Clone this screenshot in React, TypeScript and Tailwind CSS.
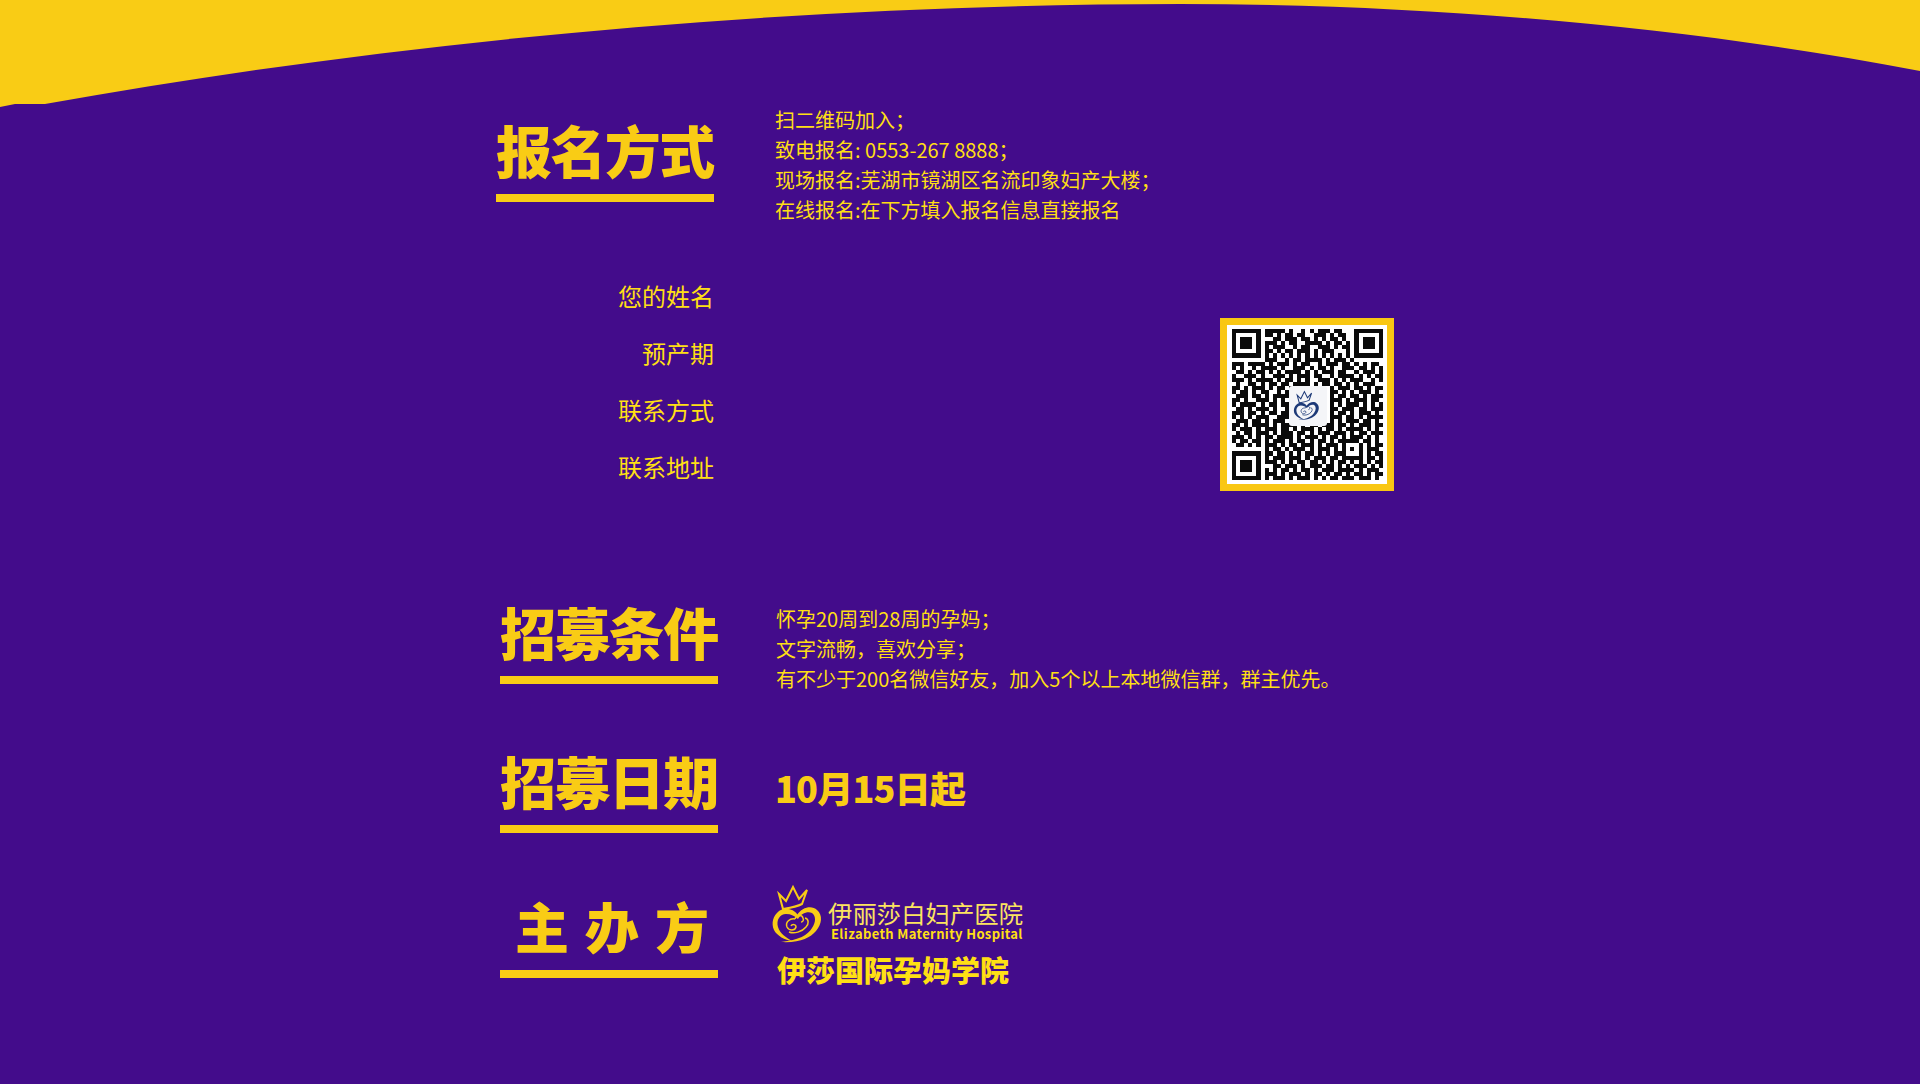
import React from 'react';

const YELLOW = '#f9cc15';

// hand-read from the picture, 37 x 37 modules
const qrRows = [
  '#######.#####.#..#.#.###.##...#######',
  '#.....#.##.#.##.##..###.#.##..#.....#',
  '#.###.#...##.###.##.#.#.##.#..#.###.#',
  '#.###.#.###.#.##..####.#.##.#.#.###.#',
  '#.###.#.#.###..#.##..###.#.##.#.###.#',
  '#.....#.##.#.##.###.#.###...#.#.....#',
  '#######.#.#.#.#.#.#.#.#.#.#.#.#######',
  '........###..#.##.####.#.###.#.......',
  '###.####.#.###.#.##..#.###.##.#.#.##.',
  '#.#..#.####.#..###.#.##.#..###.##.#.#',
  '.##.#.##.#.#.####.#.#.###.##..#.###.#',
  '#..###.#..###.#.###.##..#.####.#.#.##',
  '###.#.####.#.##.#.#..###.#.#.###..#.#',
  '.#..##.#.##.##.####.#.##.##.#.#.###..',
  '##.#.###.#.##.###.#.##..#.###.##.#.##',
  '#.##.#.##..#.##.#.###.#.##.#.#.###.#.',
  '.###.##.#.####.#.##.#...#.##.##.#.###',
  '##.#..###.#.#.###.#.###.###.#.###.##.',
  '#.####.#.##.##.#.#.##.#.#.#.###.#.#.#',
  '.##.#.###.#..##.###.#.#.##.###.##.###',
  '###.##.#.##.##.#.#.##.#.#.##.#.###.#.',
  '#.#.#.###..###.#.##.#.#.###.##.#.####',
  '.###.##.#.###.#.#.###.#.#.#.###.##.#.',
  '##.#.####.#.####.#.##.###.##.#.###.##',
  '#.###.#.###.##.#.###.#.##.#.####.#.#.',
  '.#.##.###.#.###.##.#.###.###.#.##.###',
  '###.#.#.##.####.#.###.#.##.#.###.#.#.',
  '#.##.##.#.###.#.##.#.##.#.#####.##.#.',
  '.##.#.#.###.#.##.###.#.###.#...#.#.##',
  '........#.##.#.###.#.###.#.#.#.#.###.',
  '#######.##.##.#.#.##.#.#.###...#.#.##',
  '#.....#.#.###.###.#.###.##.#####.##.#',
  '#.###.#.###.#.#.##.##.#.#.##.#.#.#.##',
  '#.###.#...##.###.#.###.##.#.#.###.#.#',
  '#.###.#.#.#.##.#.##.#.###.####.#.###.',
  '#.....#.###.#.###.#.##.#.##.#.##.#.##',
  '#######.#.###.#.###.#.#.##.###.###.#.',
];

const Logo = ({ color, className }: { color: string; className: string }) => (
  <svg viewBox="0 0 70 70" className={className} fill="none">
    <path
      d="M14 14 L21 21 L28 7 L34 19 L42 10 L37 24 C31 27 24 28 18 29 Z"
      stroke={color}
      strokeWidth="2"
      strokeLinejoin="miter"
    />
    <path
      d="M33 35 C28 28 20 27 14 31 C8 36 6 43 9 50 C12 56 20 60 27 61 C22 58 15 54 13 47 C11 40 15 34 21 34 C26 34 30 36 33 39 Z"
      fill={color}
    />
    <path
      d="M32 35 C37 27 47 25 52 30 C58 35 57 44 51 51 C45 58 35 63 16 62 C34 60 43 55 47 48 C51 42 51 36 47 33 C42 31 36 34 33 39 Z"
      fill={color}
    />
    <path
      d="M30 39 C25 38 20 42 22 47 C24 51 30 51 31 47 C31 44 27 44 26 46 M30 39 C31 35 37 34 38 38 C39 40 38 42 36 42 M40 38 C44 39 44 44 41 47 C37 52 29 54 24 52"
      stroke={color}
      strokeWidth="1.5"
    />
  </svg>
);

const QrCode = () => (
  <div className="relative w-[174px] h-[173px] bg-white border-[7px] border-[#f9c712] flex items-center justify-center">
    <svg viewBox="0 0 37 37" className="w-[151px] h-[151px]" shapeRendering="crispEdges">
      {qrRows.map((row, y) =>
        row.split('').map((c, x) => (c === '#' ? <rect key={`${x}-${y}`} x={x} y={y} width="1" height="1" fill="#0a0a0a" /> : null)),
      )}
    </svg>
    <div className="absolute left-[62px] top-[61px] w-[38px] h-[40px] bg-[#f4f5f8] rounded-[3px] flex items-center justify-center">
      <Logo color="#1d3a78" className="w-[36px] h-[36px]" />
    </div>
  </div>
);

const SectionTitle = ({ title, spaced }: { title: string; spaced?: boolean }) => (
  <div className="w-[218px] shrink-0">
    <h2
      className={
        spaced
          ? 'h-16 pl-[15px] text-[54px] leading-[60px] font-black tracking-[16px] whitespace-nowrap'
          : 'h-16 text-[56px] leading-[58px] font-black tracking-[-1.6px] whitespace-nowrap'
      }
    >
      {title}
    </h2>
    <div className="mt-[10px] h-2 bg-[#f9cc15]" />
  </div>
);

const TextLines = ({ lines }: { lines: string[] }) => (
  <div className="text-[20px] leading-[30px] text-[#ffdf14]">
    {lines.map((line) => (
      <p key={line} className="whitespace-nowrap">{line}</p>
    ))}
  </div>
);

export default function App() {
  return (
    <div
      className="relative h-[1084px] overflow-hidden bg-[#430c8b] text-[#f9cc15]"
      style={{ fontFamily: '"Noto Sans CJK SC", "Noto Sans", sans-serif' }}
    >
      {/* top wave */}
      <svg viewBox="0 0 1920 110" className="absolute left-0 top-0 w-[1920px] h-[110px]">
        <path d="M0 0 H1920 V71 C1680 25 1420 4 1180 4 C800 4 400 40 45 104 H15 L0 107 Z" fill={YELLOW} />
      </svg>

      <main className="relative w-[928px] mx-auto pt-[105px]">
        <section className="flex">
          <div className="mt-[15px]">
            <SectionTitle title="报名方式" />
          </div>
          <div className="ml-[61px]">
            <TextLines
              lines={[
                '扫二维码加入；',
                '致电报名: 0553-267 8888；',
                '现场报名:芜湖市镜湖区名流印象妇产大楼；',
                '在线报名:在下方填入报名信息直接报名',
              ]}
            />
          </div>
        </section>

        <section className="flex items-start mt-[42px]">
          <div className="w-[218px] text-right text-[24px] leading-[57px] text-[#ffdf14]">
            <p>您的姓名</p>
            <p>预产期</p>
            <p>联系方式</p>
            <p>联系地址</p>
          </div>
          <div className="ml-[506px] mt-[51px]">
            <QrCode />
          </div>
        </section>

        <section className="flex mt-[107px] pl-1">
          <SectionTitle title="招募条件" />
          <div className="ml-[58px] mt-[2px]">
            <TextLines
              lines={[
                '怀孕20周到28周的孕妈；',
                '文字流畅，喜欢分享；',
                '有不少于200名微信好友，加入5个以上本地微信群，群主优先。',
              ]}
            />
          </div>
        </section>

        <section className="flex mt-[57px] pl-1">
          <SectionTitle title="招募日期" />
          <p className="ml-[57px] mt-[11px] text-[36px] leading-[50px] font-black tracking-[-0.8px] text-[#f9cc15]">
            10月15日起
          </p>
        </section>

        <section className="flex mt-[63px] pl-1">
          <SectionTitle title="主办方" spaced />
          <div className="ml-[52px] -mt-[9px]">
            <div className="flex items-start -ml-[5px]">
              <Logo color={YELLOW} className="w-[70px] h-[70px] -mt-[7px] shrink-0" />
              <div className="-ml-[7px] mt-[12px]">
                <p className="text-[24.4px] leading-[27px] text-[#fce45f] whitespace-nowrap">伊丽莎白妇产医院</p>
                <p className="ml-[3px] text-[13px] leading-[15px] font-bold tracking-[0.37px] text-[#ffdf14] whitespace-nowrap">
                  Elizabeth Maternity Hospital
                </p>
              </div>
            </div>
            <p className="ml-[7px] mt-[2px] text-[29px] leading-[34px] font-black text-[#ffdf14] whitespace-nowrap">伊莎国际孕妈学院</p>
          </div>
        </section>
      </main>
    </div>
  );
}
